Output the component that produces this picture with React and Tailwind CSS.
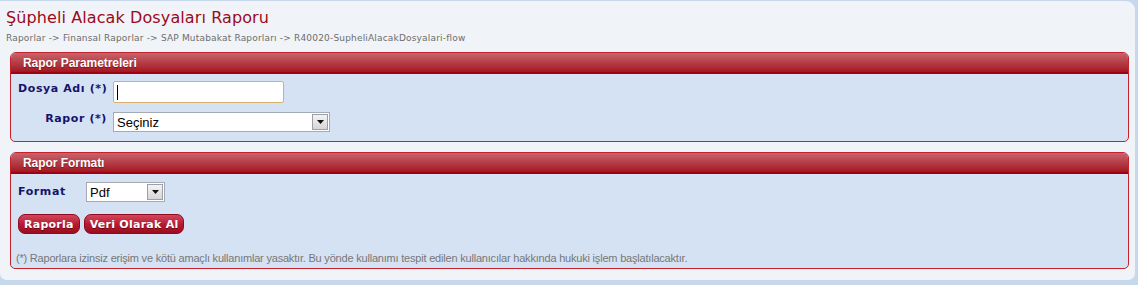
import React from "react";

const verdana = { fontFamily: '"DejaVu Sans", Verdana, sans-serif' };
const arial = { fontFamily: '"Liberation Sans", Arial, sans-serif' };

function PanelHeader({ title }) {
  return (
    <div className="h-[21px] rounded-t-[5px] border-b-2 border-[#a00010] bg-gradient-to-b from-[#c8636b] via-[#b53d47] to-[#a3141f] pl-[12px] flex items-center">
      <span
        className="text-[12px] font-bold text-white tracking-[-0.05px] [text-shadow:0_1px_1px_rgba(90,0,0,0.6)]"
        style={arial}
      >
        {title}
      </span>
    </div>
  );
}

function FakeSelect({ value, width }) {
  return (
    <div
      className="h-[20px] bg-white border border-[#a5abb3] flex items-center justify-between"
      style={{ width }}
    >
      <span className="pl-[3px] text-[13px] text-black leading-none" style={arial}>
        {value}
      </span>
      <span className="mr-px w-[16px] h-[16px] border border-[#9aa0a8] bg-gradient-to-b from-[#f4f4f4] to-[#d6d6d6] flex items-center justify-center">
        <svg width="7" height="4" viewBox="0 0 7 4">
          <path d="M0 0h7L3.5 4z" fill="#111" />
        </svg>
      </span>
    </div>
  );
}

function RedButton({ children }) {
  return (
    <button
      className="h-[20px] px-[5px] rounded-[7px] border border-[#8e0a1c] bg-gradient-to-b from-[#d2455d] via-[#b81b34] to-[#9c0b1e] text-white text-[11px] font-bold tracking-[0.25px] leading-none [text-shadow:0_1px_0_rgba(60,0,0,0.6)]"
      style={verdana}
    >
      {children}
    </button>
  );
}

export default function App() {
  return (
    <div className="w-[1138px] h-[285px] bg-[#c8d8ec] pt-px pr-[3px] pb-[5px]">
      <div className="h-full bg-[#f0f4f9] rounded-tr-[9px] rounded-br-[7px] rounded-bl-[7px] pl-[10px] pr-[6px] pt-[6px]">
        <h1 className="-ml-[4px] text-[16px] tracking-[0.1px] leading-[22px] text-[#9c0a1a]" style={verdana}>
          Şüpheli Alacak Dosyaları Raporu
        </h1>
        <p className="-ml-[4px] mt-[3px] text-[9px] tracking-[0.18px] leading-[12px] text-[#6d6d6d]" style={verdana}>
          Raporlar -&gt; Finansal Raporlar -&gt; SAP Mutabakat Raporları -&gt; R40020-SupheliAlacakDosyalari-flow
        </p>

        <section className="mt-[8px] h-[90px] rounded-t-[6px] rounded-b-[5px] border border-[#c3222c] bg-[#d5e2f3]">
          <PanelHeader title="Rapor Parametreleri" />
          <div className="pt-[7px] pl-[7px] flex flex-col gap-[9px]">
            <div className="flex items-start gap-[6px]">
              <span className="w-[89px] pt-[2px] text-right text-[11px] font-bold tracking-[0.6px] text-[#14146a] leading-[12px] whitespace-nowrap" style={verdana}>
                Dosya Adı (*)
              </span>
              <div className="w-[171px] h-[22px] bg-white border border-[#d7b06c] rounded-[2px] flex items-center pl-[3px]">
                <span className="w-px h-[15px] bg-black" />
              </div>
            </div>
            <div className="flex items-start gap-[6px]">
              <span className="w-[89px] pt-[1px] text-right text-[11px] font-bold tracking-[0.6px] text-[#14146a] leading-[12px] whitespace-nowrap" style={verdana}>
                Rapor (*)
              </span>
              <FakeSelect value="Seçiniz" width={217} />
            </div>
          </div>
        </section>

        <section className="mt-[10px] h-[117px] rounded-t-[6px] rounded-b-[5px] border border-[#c3222c] bg-[#d5e2f3]">
          <PanelHeader title="Rapor Formatı" />
          <div className="pt-[8px] pl-[7px]">
            <div className="flex items-center">
              <span className="w-[68px] text-[11px] font-bold tracking-[0.6px] text-[#14146a] leading-[12px]" style={verdana}>
                Format
              </span>
              <FakeSelect value="Pdf" width={79} />
            </div>
            <div className="mt-[12px] flex gap-[4px]">
              <RedButton>Raporla</RedButton>
              <RedButton>Veri Olarak Al</RedButton>
            </div>
            <p className="mt-[18px] -ml-[2px] text-[11px] tracking-[-0.2px] leading-[13px] text-[#777777]" style={arial}>
              (*) Raporlara izinsiz erişim ve kötü amaçlı kullanımlar yasaktır. Bu yönde kullanımı tespit edilen kullanıcılar hakkında hukuki işlem başlatılacaktır.
            </p>
          </div>
        </section>
      </div>
    </div>
  );
}
